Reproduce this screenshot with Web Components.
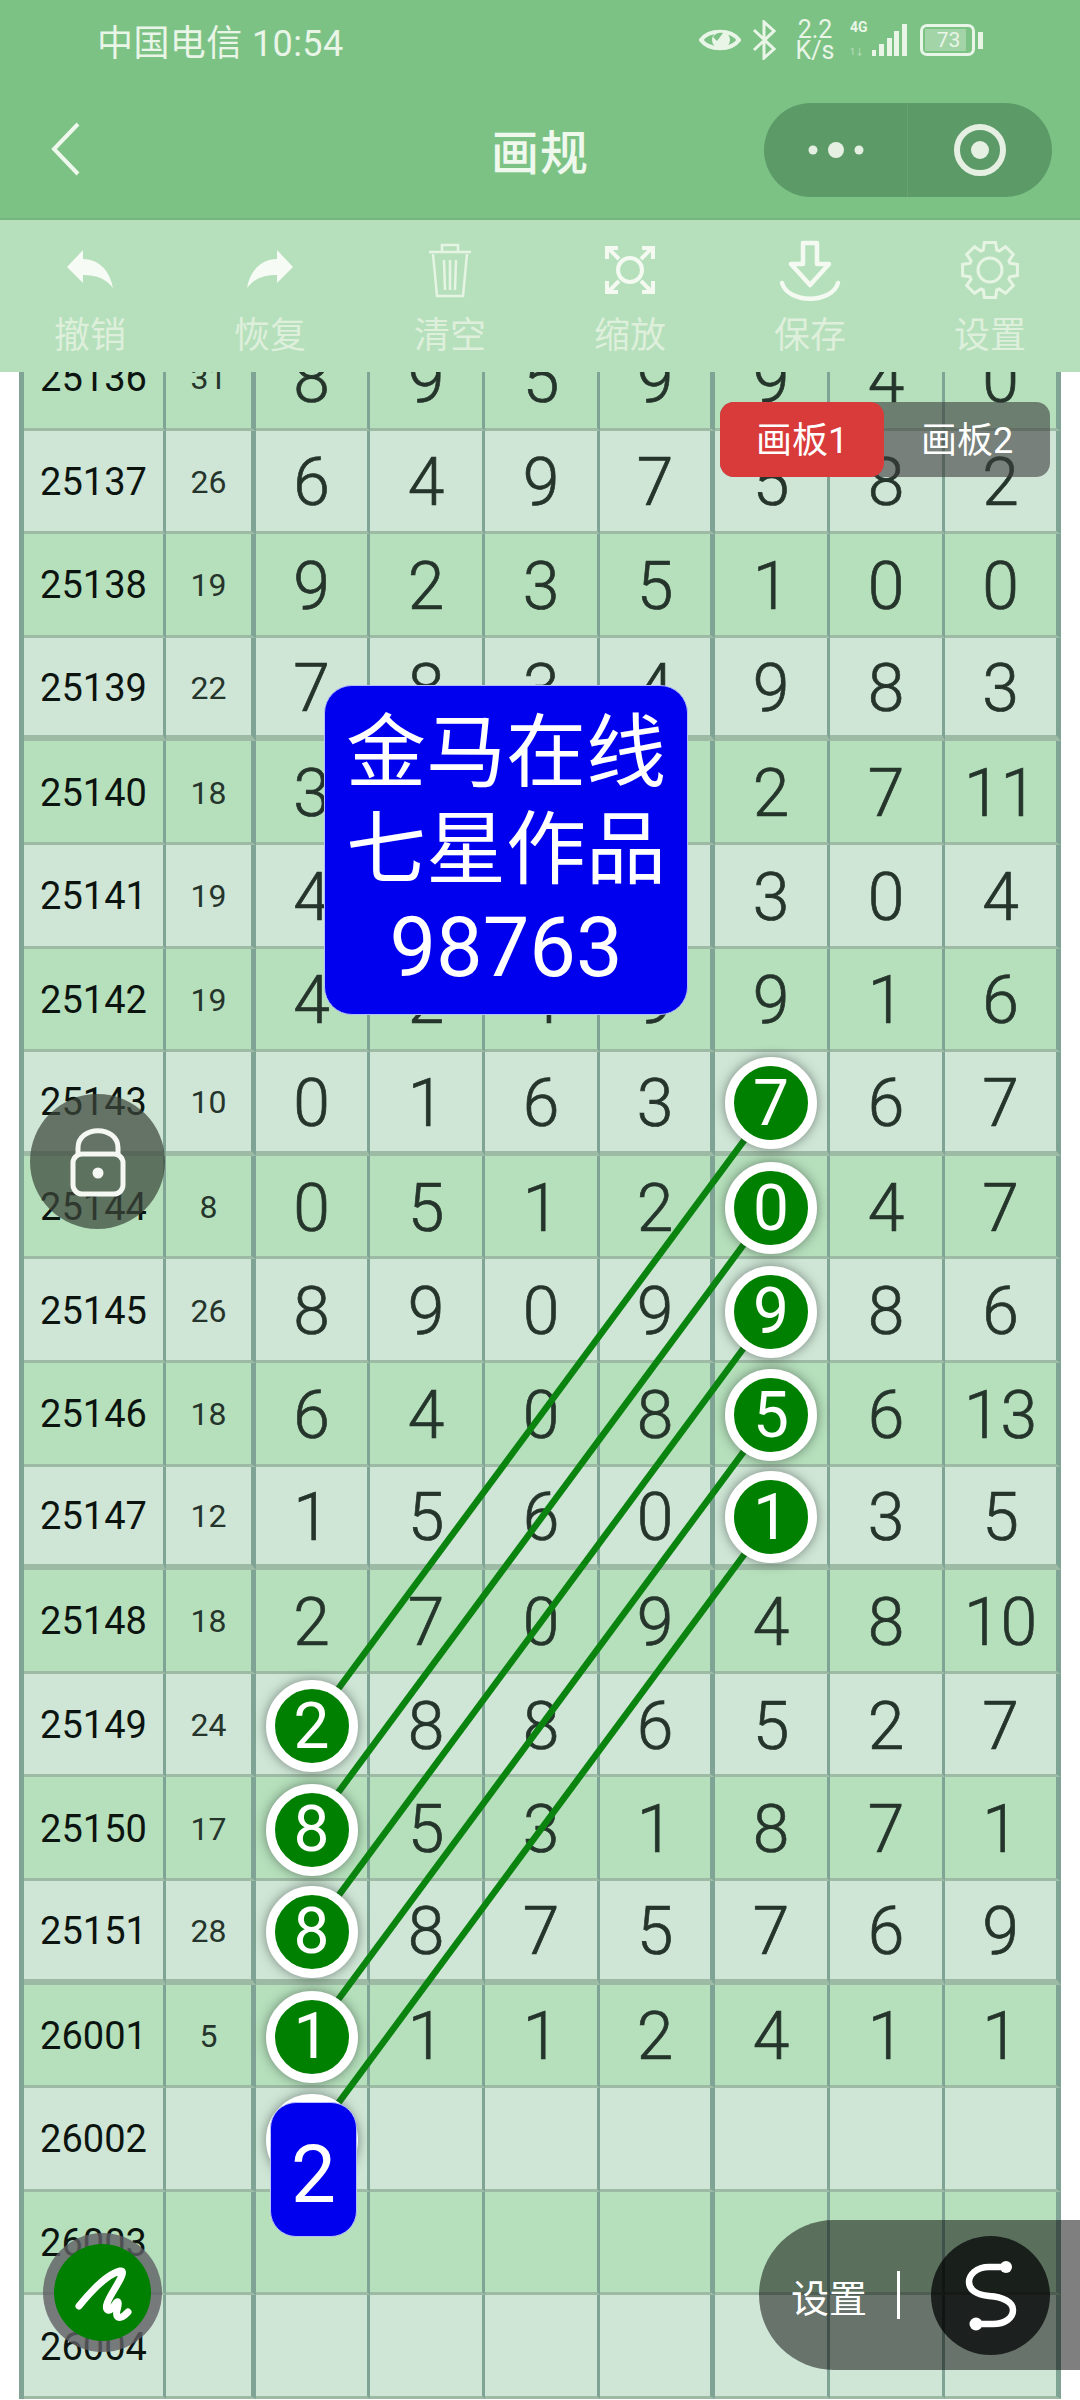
<!DOCTYPE html>
<html lang="zh">
<head>
<meta charset="utf-8">
<title>画规</title>
<style>
    html, body {
        margin: 0;
        padding: 0;
        background: #fff;
    }

    body {
        position: relative;
        width: 1080px;
        height: 2400px;
        overflow: hidden;
        display: flex;
        flex-direction: column;
        font-family: Roboto, "Noto Sans CJK SC", sans-serif;
    }
</style>
</head>
<body>
    <app-header></app-header>
    <tool-bar>
        <tool-item icon="undo" label="撤销"></tool-item>
        <tool-item icon="redo" label="恢复"></tool-item>
        <tool-item icon="trash" label="清空"></tool-item>
        <tool-item icon="zoom" label="缩放"></tool-item>
        <tool-item icon="save" label="保存"></tool-item>
        <tool-item icon="gear" label="设置"></tool-item>
    </tool-bar>
    <draw-board></draw-board>
    <board-tabs></board-tabs>
    <promo-card>
        <span>金马在线</span>
        <span>七星作品</span>
        <span class="code">98763</span>
    </promo-card>
    <lock-button></lock-button>
    <pen-button></pen-button>
    <settings-pill></settings-pill>

<script>
class AppHeader extends HTMLElement {
    constructor() {
        super();
        this.attachShadow({ mode: 'open' });
    }

    connectedCallback() {
        this.shadowRoot.innerHTML = `
        <style>
            :host {
                display: block;
                height: 220px;
                box-sizing: border-box;
                background: #7cc285;
                border-bottom: 2px solid #74b67d;
                color: #e9f5e7;
                font-family: Roboto, "Noto Sans CJK SC", sans-serif;
            }

            .status {
                height: 80px;
                padding: 0 97px 0 97px;
                display: flex;
                align-items: center;
                justify-content: space-between;
            }

            .carrier {
                font-size: 36px;
                letter-spacing: 0.4px;
                white-space: nowrap;
            }

            .indicators {
                display: flex;
                align-items: center;
                gap: 11px;
            }

            .speed {
                display: flex;
                flex-direction: column;
                align-items: center;
                font-size: 25px;
                line-height: 21px;
                width: 38px;
                margin: 0 5px 0 9px;
            }

            .net {
                display: flex;
                flex-direction: column;
                font-size: 14px;
                font-weight: 700;
                line-height: 15px;
                width: 20px;
                margin-right: -10px;
            }

            .net small {
                font-size: 9px;
                font-weight: 400;
                opacity: 0.6;
                margin-top: 10px;
            }

            .battery {
                display: flex;
                align-items: center;
                gap: 3px;
                margin-left: 2px;
            }

            .battery-body {
                width: 55px;
                height: 32px;
                box-sizing: border-box;
                border: 3px solid #e9f5e7;
                border-radius: 7px;
                padding: 2px;
            }

            .battery-level {
                width: 78%;
                height: 100%;
                background: #a3d4a8;
                display: flex;
                align-items: center;
                justify-content: center;
                font-size: 21px;
                padding-left: 6px;
            }

            .battery-cap {
                width: 5px;
                height: 17px;
                background: #e9f5e7;
            }

            nav {
                height: 138px;
                display: flex;
                align-items: center;
                justify-content: space-between;
                padding: 0 28px 0 50px;
                position: relative;
            }

            h1 {
                position: absolute;
                left: 0;
                right: 0;
                margin: 0;
                text-align: center;
                font-size: 48px;
                font-weight: 500;
                letter-spacing: 1px;
                color: #eff8ed;
            }

            .capsule {
                width: 288px;
                height: 94px;
                margin-top: 2px;
                border-radius: 47px;
                background: #5c9a68;
                display: grid;
                grid-template-columns: 1fr 1fr;
                position: relative;
            }

            .capsule div {
                display: flex;
                align-items: center;
                justify-content: center;
            }

            .capsule div:first-child {
                border-right: 1px solid #68a473;
            }
        </style>

        <div class="status">
            <span class="carrier">中国电信 10:54</span>
            <div class="indicators">
                <svg width="42" height="30" viewBox="0 0 42 30" fill="none">
                    <path d="M2 15C10 4 32 4 40 15C32 26 10 26 2 15Z" stroke="#e9f5e7" stroke-width="4"/>
                    <circle cx="22" cy="15" r="9" fill="#e9f5e7"/>
                    <path d="M14 12C16 8 21 7 24 8L18 16Z" fill="#7cc285"/>
                </svg>
                <svg width="24" height="40" viewBox="0 0 24 40" fill="none" stroke="#e9f5e7" stroke-width="3">
                    <path d="M2 10L22 29L12 38V2L22 11L2 30"/>
                </svg>
                <div class="speed"><span>2.2</span><span>K/s</span></div>
                <div class="net"><span>4G</span><small>1↓</small></div>
                <svg width="36" height="32" viewBox="0 0 36 32" fill="#e9f5e7">
                    <rect x="1" y="26" width="4" height="6"/>
                    <rect x="8" y="20" width="5" height="12"/>
                    <rect x="16" y="14" width="5" height="18"/>
                    <rect x="23" y="7" width="5" height="25"/>
                    <rect x="31" y="0" width="5" height="32"/>
                </svg>
                <div class="battery">
                    <div class="battery-body"><div class="battery-level">73</div></div>
                    <div class="battery-cap"></div>
                </div>
            </div>
        </div>

        <nav>
            <svg width="30" height="54" viewBox="0 0 30 54" fill="none" stroke="#eff8ed" stroke-width="4">
                <path d="M28 2L4 27L28 52"/>
            </svg>
            <h1>画规</h1>
            <div class="capsule">
                <div>
                    <svg width="60" height="20" viewBox="0 0 60 20" fill="#e6f0e2">
                        <circle cx="7" cy="10" r="4.5"/>
                        <circle cx="30" cy="10" r="8"/>
                        <circle cx="53" cy="10" r="4.5"/>
                    </svg>
                </div>
                <div>
                    <svg width="56" height="56" viewBox="0 0 56 56">
                        <circle cx="28" cy="28" r="23" fill="none" stroke="#e6f0e2" stroke-width="6"/>
                        <circle cx="28" cy="28" r="9" fill="#e6f0e2"/>
                    </svg>
                </div>
            </div>
        </nav>
        `;
    }
}

class ToolBar extends HTMLElement {
    constructor() {
        super();
        this.attachShadow({ mode: 'open' });
    }

    connectedCallback() {
        this.shadowRoot.innerHTML = `
        <style>
            :host {
                display: grid;
                grid-template-columns: repeat(6, 1fr);
                height: 152px;
                background: #b5e0bb;
            }
        </style>
        <slot></slot>
        `;
    }
}

function gearPath() {
    const points = [];
    for (let i = 0; i < 8; i++) {
        const mid = (i * Math.PI) / 4;
        [[-0.33, 21], [-0.2, 28], [0.2, 28], [0.33, 21]].forEach(([offset, radius]) => {
            const x = 30 + radius * Math.sin(mid + offset);
            const y = 28 - radius * Math.cos(mid + offset);
            points.push(`${x.toFixed(1)} ${y.toFixed(1)}`);
        });
    }
    return `M${points.join('L')}Z`;
}

const TOOL_ICONS = {
    undo: '<path fill="#f7fbf5" d="M7 25L23 8V17C38 17 50 28 53 46C45 36 36 33 23 33V41Z"/>',
    redo: '<path fill="#f7fbf5" d="M53 25L37 8V17C22 17 10 28 7 46C15 36 24 33 37 33V41Z"/>',
    trash: `<g fill="none" stroke="#e6f4e3" stroke-width="2.5">
        <path d="M9 10H51M22 10V3H38V10M13 12L17 54H43L47 12M24 18L25 48M30 18V48M36 18L35 48"/>
    </g>`,
    zoom: `<g fill="none" stroke="#f4faf1" stroke-width="4">
        <circle cx="30" cy="28" r="12"/>
        <path d="M8 6L19 17M7 17V6H18M52 6L41 17M53 17V6H42M8 50L19 39M7 39V50H18M52 50L41 39M53 39V50H42"/>
    </g>`,
    save: `<g fill="none" stroke="#f4faf1" stroke-width="4.5" stroke-linejoin="round">
        <path d="M23 1H37V22H49L30 43L11 22H23Z"/>
        <path d="M2 41C8 62 52 62 58 41" stroke-linecap="round"/>
    </g>`,
    gear: `<g fill="none" stroke="#e6f4e3" stroke-width="3">
        <path d="${gearPath()}"/>
        <circle cx="30" cy="28" r="12"/>
    </g>`
};

class ToolItem extends HTMLElement {
    constructor() {
        super();
        this.attachShadow({ mode: 'open' });
    }

    connectedCallback() {
        const icon = TOOL_ICONS[this.getAttribute('icon')];
        this.shadowRoot.innerHTML = `
        <style>
            :host {
                display: flex;
                flex-direction: column;
                align-items: center;
                padding-top: 22px;
                color: #deefdb;
            }

            svg {
                display: block;
                overflow: visible;
            }

            span {
                margin-top: 6px;
                font-size: 36px;
                line-height: 48px;
                font-family: "Noto Sans CJK SC", sans-serif;
            }
        </style>
        <svg width="60" height="60" viewBox="0 0 60 60">${icon}</svg>
        <span>${this.getAttribute('label')}</span>
        `;
    }
}

const ROW_HEIGHT = 103.6;

// issue, sum, seven digits; a leading * marks a picked number, '' stays empty
const ROWS = [
    ['25136', '31', '8', '9', '5', '9', '9', '4', '0'],
    ['25137', '26', '6', '4', '9', '7', '5', '8', '2'],
    ['25138', '19', '9', '2', '3', '5', '1', '0', '0'],
    ['25139', '22', '7', '8', '3', '4', '9', '8', '3'],
    ['25140', '18', '3', '', '', '', '2', '7', '11'],
    ['25141', '19', '4', '', '', '', '3', '0', '4'],
    ['25142', '19', '4', '2', '4', '9', '9', '1', '6'],
    ['25143', '10', '0', '1', '6', '3', '*7', '6', '7'],
    ['25144', '8', '0', '5', '1', '2', '*0', '4', '7'],
    ['25145', '26', '8', '9', '0', '9', '*9', '8', '6'],
    ['25146', '18', '6', '4', '0', '8', '*5', '6', '13'],
    ['25147', '12', '1', '5', '6', '0', '*1', '3', '5'],
    ['25148', '18', '2', '7', '0', '9', '4', '8', '10'],
    ['25149', '24', '*2', '8', '8', '6', '5', '2', '7'],
    ['25150', '17', '*8', '5', '3', '1', '8', '7', '1'],
    ['25151', '28', '*8', '8', '7', '5', '7', '6', '9'],
    ['26001', '5', '*1', '1', '1', '2', '4', '1', '1'],
    ['26002', '', '*', '', '', '', '', '', ''],
    ['26003', '', '', '', '', '', '', '', ''],
    ['26004', '', '', '', '', '', '', '', '']
];

class DrawBoard extends HTMLElement {
    constructor() {
        super();
        this.attachShadow({ mode: 'open' });
    }

    connectedCallback() {
        const rowsHtml = ROWS.map((row, rowIndex) => {
            let rowClass = rowIndex % 2 === 0 ? 'dark' : 'light';
            if ([3, 11, 15].includes(rowIndex)) rowClass += ' heavy';
            if (rowIndex === 7) rowClass += ' medium';

            return row.map((value, colIndex) => {
                const kind = colIndex === 0 ? 'issue' : colIndex === 1 ? 'sum' : 'digit';
                const edge = colIndex === 1 || colIndex === 5 ? ' split' : colIndex === 8 ? ' last' : '';
                const content = value.startsWith('*') ? `<b class="ball">${value.slice(1)}</b>` : value;
                return `<div class="cell ${kind} ${rowClass}${edge}">${content}</div>`;
            }).join('');
        }).join('');

        const lines = [7, 8, 9, 10, 11].map((rowIndex) => {
            const y1 = (rowIndex + 0.5) * ROW_HEIGHT;
            const y2 = (rowIndex + 6.5) * ROW_HEIGHT;
            return `<line x1="752" y1="${y1}" x2="292" y2="${y2}"/>`;
        }).join('');

        this.shadowRoot.innerHTML = `
        <style>
            :host {
                display: block;
                flex: 1;
                min-height: 0;
                overflow: hidden;
                padding-left: 19px;
                background: #fff;
            }

            .sheet {
                position: relative;
                width: 1042px;
                margin-top: -45px;
                box-sizing: border-box;
                border-left: 5px solid #7fa394;
                display: grid;
                grid-template-columns: 142px 90px 114px repeat(5, 115px) 116px;
                grid-auto-rows: ${ROW_HEIGHT}px;
            }

            .cell {
                box-sizing: border-box;
                padding-top: 4px;
                display: flex;
                align-items: center;
                justify-content: center;
                border-right: 3px solid #7fa394;
                border-bottom: 3px solid #9dbba4;
                color: #26352c;
                font-family: Roboto, sans-serif;
            }

            .light {
                background: #cfe6d6;
            }

            .dark {
                background: #b5e0bb;
            }

            .heavy {
                border-bottom-width: 6px;
            }

            .medium {
                border-bottom-width: 5px;
            }

            .split {
                border-right-width: 5px;
            }

            .last {
                border-right-width: 5px;
            }

            .issue {
                padding-top: 2px;
                font-size: 38px;
                color: #0c1410;
            }

            .sum {
                padding-top: 2px;
                font-size: 32px;
            }

            .digit {
                font-size: 66px;
                font-weight: 300;
                -webkit-text-stroke: 0.7px #26352c;
            }

            .ball {
                position: relative;
                z-index: 3;
                flex: none;
                width: 92px;
                height: 92px;
                box-sizing: border-box;
                border: 9px solid #fff;
                border-radius: 50%;
                background: #008000;
                color: #fff;
                font-size: 64px;
                font-weight: 400;
                -webkit-text-stroke: 0;
                display: flex;
                align-items: center;
                justify-content: center;
                box-shadow: 0 0 12px rgba(40, 50, 45, 0.55);
            }

            svg {
                position: absolute;
                left: -5px;
                top: 0;
                z-index: 2;
                pointer-events: none;
            }

            line {
                stroke: #0a840f;
                stroke-width: 6.5;
            }

            .drag {
                position: absolute;
                z-index: 4;
                left: 246px;
                top: 1775px;
                width: 87px;
                height: 135px;
                box-sizing: border-box;
                padding-top: 10px;
                border: 1px solid #b5bdfa;
                border-radius: 26px;
                background: #0000ee;
                color: #fff;
                font-size: 80px;
                display: flex;
                align-items: center;
                justify-content: center;
            }
        </style>

        <div class="sheet">
            ${rowsHtml}
            <svg width="1042" height="2072" viewBox="0 0 1042 2072">${lines}</svg>
            <div class="drag">2</div>
        </div>
        `;
    }
}

class BoardTabs extends HTMLElement {
    constructor() {
        super();
        this.attachShadow({ mode: 'open' });
    }

    connectedCallback() {
        this.shadowRoot.innerHTML = `
        <style>
            :host {
                position: absolute;
                left: 720px;
                top: 402px;
                z-index: 5;
                width: 330px;
                height: 75px;
                display: grid;
                grid-template-columns: 164px 1fr;
                border-radius: 14px;
                background: rgba(60, 60, 60, 0.6);
                color: #fff;
                font-size: 36px;
                font-family: Roboto, "Noto Sans CJK SC", sans-serif;
            }

            div {
                display: flex;
                align-items: center;
                justify-content: center;
                padding-bottom: 5px;
                border-radius: 14px;
            }

            .active {
                background: #d93a3a;
            }
        </style>
        <div class="active">画板1</div>
        <div>画板2</div>
        `;
    }
}

class PromoCard extends HTMLElement {
    constructor() {
        super();
        this.attachShadow({ mode: 'open' });
    }

    connectedCallback() {
        this.shadowRoot.innerHTML = `
        <style>
            :host {
                position: absolute;
                left: 324px;
                top: 685px;
                z-index: 5;
                width: 364px;
                height: 330px;
                box-sizing: border-box;
                border: 1px solid #b5bdfa;
                border-radius: 28px;
                background: #0000ee;
                color: #fff;
                display: flex;
                flex-direction: column;
                justify-content: center;
                align-items: center;
                font-size: 80px;
                line-height: 97px;
                font-family: Roboto, "Noto Sans CJK SC", sans-serif;
            }

            ::slotted(span) {
                display: block;
                white-space: nowrap;
            }

            ::slotted(.code) {
                font-size: 83px;
            }
        </style>
        <slot></slot>
        `;
    }
}

class LockButton extends HTMLElement {
    constructor() {
        super();
        this.attachShadow({ mode: 'open' });
    }

    connectedCallback() {
        this.shadowRoot.innerHTML = `
        <style>
            :host {
                position: absolute;
                left: 30px;
                top: 1094px;
                z-index: 5;
                width: 135px;
                height: 135px;
                border-radius: 50%;
                background: rgba(60, 70, 60, 0.72);
                display: flex;
                align-items: center;
                justify-content: center;
            }
        </style>
        <svg width="60" height="72" viewBox="0 0 60 72" fill="none" stroke="#f4f7f2" stroke-width="5">
            <path d="M10 28V22C10 -1 50 -1 50 22V28"/>
            <rect x="5" y="28" width="50" height="40" rx="9"/>
            <circle cx="30" cy="47" r="5.5" fill="#f4f7f2" stroke="none"/>
        </svg>
        `;
    }
}

class PenButton extends HTMLElement {
    constructor() {
        super();
        this.attachShadow({ mode: 'open' });
    }

    connectedCallback() {
        this.shadowRoot.innerHTML = `
        <style>
            :host {
                position: absolute;
                left: 43px;
                top: 2233px;
                z-index: 5;
                width: 119px;
                height: 119px;
                box-sizing: border-box;
                padding: 11px;
                border-radius: 50%;
                background: rgba(95, 95, 100, 0.8);
            }

            div {
                width: 97px;
                height: 97px;
                border-radius: 50%;
                background: #008000;
            }
        </style>
        <div>
            <svg width="97" height="97" viewBox="0 0 97 97" fill="none" stroke="#fff" stroke-width="7" stroke-linecap="round" stroke-linejoin="round">
                <path d="M25 62C38 46 54 30 66 27C72 26 66 36 60 46C54 56 50 64 54 66C58 68 62 56 64 58C66 60 60 70 64 73C68 75 72 70 74 68"/>
            </svg>
        </div>
        `;
    }
}

class SettingsPill extends HTMLElement {
    constructor() {
        super();
        this.attachShadow({ mode: 'open' });
    }

    connectedCallback() {
        this.shadowRoot.innerHTML = `
        <style>
            :host {
                position: absolute;
                left: 759px;
                right: 0;
                top: 2220px;
                z-index: 5;
                height: 150px;
                box-sizing: border-box;
                padding-left: 32px;
                border-radius: 75px 0 0 75px;
                background: rgba(0, 0, 0, 0.5);
                color: #fff;
                display: flex;
                align-items: center;
                font-size: 38px;
                font-family: "Noto Sans CJK SC", sans-serif;
            }

            i {
                width: 3px;
                height: 48px;
                margin: 0 31px 0 30px;
                background: #fff;
            }

            div {
                width: 119px;
                height: 119px;
                border-radius: 50%;
                background: rgba(0, 0, 0, 0.72);
            }
        </style>
        <span>设置</span>
        <i></i>
        <div>
            <svg width="119" height="119" viewBox="0 0 119 119" fill="none" stroke="#fff" stroke-width="6.5">
                <path d="M75 31H58C45 31 38 39 38 46C38 54 46 59 58 60C72 61 82 66 82 74C82 82 74 88 62 88H45"/>
                <circle cx="75" cy="31" r="6" fill="#fff" stroke="none"/>
                <circle cx="45" cy="88" r="6.5" fill="#fff" stroke="none"/>
            </svg>
        </div>
        `;
    }
}

customElements.define('app-header', AppHeader);
customElements.define('tool-bar', ToolBar);
customElements.define('tool-item', ToolItem);
customElements.define('draw-board', DrawBoard);
customElements.define('board-tabs', BoardTabs);
customElements.define('promo-card', PromoCard);
customElements.define('lock-button', LockButton);
customElements.define('pen-button', PenButton);
customElements.define('settings-pill', SettingsPill);
</script>
</body>
</html>
